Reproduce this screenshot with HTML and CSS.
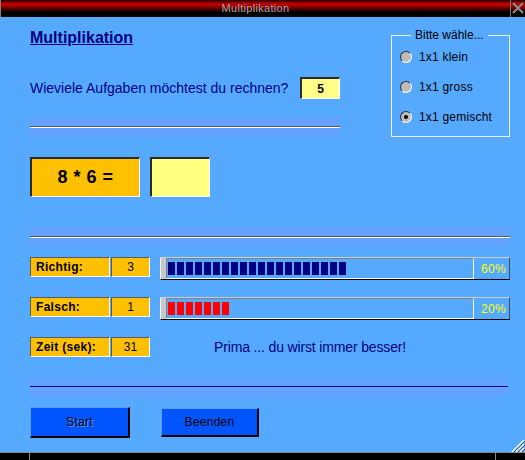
FILE: index.html
```html
<!DOCTYPE html>
<html lang="de">
<head>
<meta charset="utf-8">
<title>Multiplikation</title>
<link rel="stylesheet" href="styles.css">
</head>
<body>
<div class="window">
  <div class="titlebar">
    <span class="title">Multiplikation</span>
    <span class="close">
      <svg width="12" height="12" viewBox="0 0 12 12"><path d="M1 1 L11 11 M11 1 L1 11" stroke="#8c8c8c" stroke-width="2" fill="none"/></svg>
    </span>
  </div>
  <div class="client">
    <div class="top">
      <div class="left">
        <h1 class="heading">Multiplikation</h1>
        <div class="question">
          <span>Wieviele Aufgaben möchtest du rechnen?</span>
          <span class="count">5</span>
        </div>
        <div class="sep"><div class="sep-line"></div></div>
      </div>
      <fieldset class="choices">
        <legend>Bitte wähle...</legend>
        <div class="opt"><span class="radio"></span>1x1 klein</div>
        <div class="opt"><span class="radio"></span>1x1 gross</div>
        <div class="opt"><span class="radio on"></span>1x1 gemischt</div>
      </fieldset>
    </div>

    <div class="task">
      <div class="expr">8 * 6 =</div>
      <div class="answer"></div>
    </div>

    <div class="sep wide"><div class="sep-line"></div></div>

    <div class="stats">
      <div class="row">
        <div class="label">Richtig:</div>
        <div class="value">3</div>
        <div class="bar">
          <div class="knob"></div>
          <div class="trough blue">
            <span></span><span></span><span></span><span></span><span></span>
            <span></span><span></span><span></span><span></span><span></span>
            <span></span><span></span><span></span><span></span><span></span>
            <span></span><span></span><span></span><span></span><span></span>
          </div>
          <div class="pct">60%</div>
        </div>
      </div>
      <div class="row">
        <div class="label">Falsch:</div>
        <div class="value">1</div>
        <div class="bar">
          <div class="knob"></div>
          <div class="trough red">
            <span></span><span></span><span></span><span></span><span></span>
            <span></span><span></span>
          </div>
          <div class="pct">20%</div>
        </div>
      </div>
      <div class="row">
        <div class="label">Zeit (sek):</div>
        <div class="value">31</div>
        <div class="message">Prima ... du wirst immer besser!</div>
      </div>
    </div>

    <div class="sep navy"><div class="sep-line"></div></div>

    <div class="buttons">
      <div class="btn start">Start</div>
      <div class="btn quit">Beenden</div>
    </div>

    <svg class="grip" width="16" height="15" viewBox="0 0 16 15">
      <path d="M15 3 L3 15 M15 7 L7 15 M15 11 L11 15" stroke="#ffffff" stroke-width="1.2" fill="none"/>
      <path d="M16 4 L4 16 M16 8 L8 16 M16 12 L12 16" stroke="#555" stroke-width="1" fill="none"/>
    </svg>
  </div>
  <div class="taskbar">
    <div class="seg first"></div>
    <div class="seg mid"></div>
    <div class="seg last"></div>
  </div>
</div>
</body>
</html>
```
FILE: styles.css
```css
* { box-sizing: border-box; }
html, body { margin: 0; padding: 0; }
body {
  width: 525px;
  height: 460px;
  overflow: hidden;
  background: #000;
  font-family: "Liberation Sans", Arial, sans-serif;
}
.window {
  width: 525px;
  height: 460px;
  display: flex;
  flex-direction: column;
}
.titlebar {
  height: 17px;
  flex: none;
  display: flex;
  border-left: 1px solid #808080;
  background: linear-gradient(to bottom, #1a0000 0px, #7a0000 2px, #c80000 4px, #a00000 6px, #500000 9px, #000 12px, #000 17px);
}
.title {
  flex: 1;
  text-align: center;
  color: #a4a4a4;
  font-size: 11px;
  line-height: 16px;
  letter-spacing: 0.3px;
}
.close {
  width: 15px;
  border-left: 1px solid #777;
  display: flex;
  align-items: center;
  justify-content: center;
  padding-bottom: 2px;
}
.client {
  position: relative;
  flex: 1;
  background: #55aaff;
  padding: 0 15px 0 30px;
  display: flex;
  flex-direction: column;
}
.top {
  display: flex;
  justify-content: space-between;
}
.left { width: 310px; }
.heading {
  margin: 11px 0 0;
  font-size: 16px;
  line-height: 19px;
  font-weight: bold;
  color: #000080;
  text-decoration: underline;
}
.question {
  margin-top: 30px;
  height: 22px;
  display: flex;
  align-items: center;
  font-size: 14px;
  color: #000080;
}
.count {
  margin-left: auto;
  width: 40px;
  height: 22px;
  background: #ffff88;
  border-style: solid;
  border-width: 2px 1px 1px 2px;
  border-color: #2a2a2a #fff #fff #2a2a2a;
  display: flex;
  align-items: center;
  justify-content: center;
  font-size: 12px;
  font-weight: bold;
  color: #000;
}
.sep {
  height: 20px;
  margin-top: 18px;
  padding-top: 9px;
  background: #64a2ff;
}
.sep-line {
  height: 2px;
  border-top: 1px solid #5a5a5a;
  border-bottom: 1px solid #fff;
}
.sep.wide { margin-top: 30px; }
.sep.navy { margin-top: 17px; margin-right: 2px; }
.sep.navy .sep-line {
  height: 1px;
  border: none;
  background: #000090;
}
.choices {
  margin: 11px 0 0;
  width: 119px;
  padding: 0 0 3px 8px;
  border: 1px solid #f2f2f2;
  min-inline-size: 0;
}
.choices legend {
  margin-left: 11px;
  padding: 0 4px;
  font-size: 12px;
  line-height: 14px;
  color: #000;
}
.opt {
  height: 30px;
  display: flex;
  align-items: center;
  font-size: 12px;
  color: #000;
  letter-spacing: 0.2px;
}
.radio {
  width: 12px;
  height: 12px;
  border-radius: 50%;
  background: #bcbcbc;
  border: 1px solid;
  border-color: #2e2e2e #fff #fff #2e2e2e;
  margin-right: 7px;
  display: flex;
  align-items: center;
  justify-content: center;
}
.radio.on::after {
  content: "";
  width: 4px;
  height: 4px;
  border-radius: 50%;
  background: #000;
}
.task {
  margin-top: 20px;
  display: flex;
  gap: 10px;
}
.expr, .answer {
  height: 40px;
  border-style: solid;
  border-width: 2px 1px 1px 2px;
  border-color: #2a2a2a #fff #fff #2a2a2a;
}
.expr {
  width: 110px;
  background: #ffc000;
  display: flex;
  align-items: center;
  justify-content: center;
  font-size: 18px;
  font-weight: bold;
  color: #000;
  letter-spacing: 0.5px;
}
.answer {
  width: 60px;
  background: #ffff80;
}
.stats {
  margin-top: 10px;
  display: flex;
  flex-direction: column;
  gap: 17px;
}
.row {
  height: 23px;
  display: flex;
  align-items: flex-start;
}
.label, .value {
  height: 20px;
  background: #ffc000;
  border: 1px solid;
  border-color: #5a5a5a #fff #fff #5a5a5a;
  display: flex;
  align-items: center;
  font-size: 12px;
  color: #000;
}
.label {
  width: 80px;
  padding-left: 5px;
  font-weight: bold;
  letter-spacing: 0.3px;
}
.value {
  width: 39px;
  margin-left: 1px;
  justify-content: center;
}
.bar {
  margin-left: 10px;
  width: 350px;
  height: 23px;
  display: flex;
  border: 1px solid;
  border-color: #cfcfcf #4a4a4a #000 #f4f4f4;
}
.knob {
  width: 5px;
  background: #c8c8c8;
}
.trough {
  width: 308px;
  border: 1px solid;
  border-color: #808080 #fff #fff #808080;
  padding: 3px 0 0 1px;
  display: flex;
  gap: 2px;
  align-items: flex-start;
}
.trough span {
  width: 7px;
  height: 13px;
}
.trough.blue span { background: #000080; }
.trough.red span { background: #ff0000; }
.pct {
  flex: 1;
  display: flex;
  align-items: center;
  justify-content: flex-end;
  padding-right: 3px;
  color: #ffff00;
  font-size: 12px;
  letter-spacing: 0.3px;
}
.message {
  margin-left: 64px;
  font-size: 14px;
  line-height: 20px;
  color: #000080;
  letter-spacing: -0.15px;
}
.buttons {
  margin-top: 10px;
  display: flex;
  align-items: flex-start;
}
.btn {
  background: #0055ff;
  border-style: solid;
  border-width: 1px 2px 2px 1px;
  border-color: #5c9cff #000 #000 #5c9cff;
  display: flex;
  align-items: center;
  justify-content: center;
  font-size: 12px;
  letter-spacing: 0.3px;
}
.start {
  width: 100px;
  height: 31px;
  color: #000;
  text-shadow: 1px 1px 0 rgba(150, 190, 255, 0.6);
}
.quit {
  width: 98px;
  height: 29px;
  margin-top: 1px;
  margin-left: 31px;
  color: #000;
}
.grip {
  position: absolute;
  right: 0;
  bottom: 0;
}
.taskbar {
  height: 8px;
  flex: none;
  display: flex;
  border-top: 1px solid #8a8a8a;
  background: #000;
}
.seg { height: 100%; }
.seg.first { width: 30px; border-right: 1px solid #8a8a8a; }
.seg.mid { width: 466px; border-right: 1px solid #8a8a8a; }
.seg.last { flex: 1; }
```
